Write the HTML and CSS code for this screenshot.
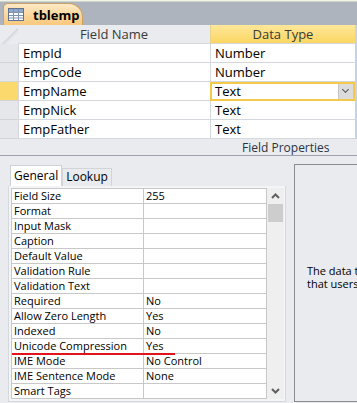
FILE: index.html
```html
<!DOCTYPE html>
<html lang="en">
<head>
    <meta charset="UTF-8">
    <meta name="viewport" content="width=device-width, initial-scale=1.0">
    <title>tblemp</title>
    <link rel="stylesheet" href="styles.css">
</head>
<body>
    <!-- document tab strip -->
    <div class="tabstrip">
        <div class="doc-tab">
            <svg class="tbl-icon" width="16" height="13" viewBox="0 0 16 13">
                <rect x="0.5" y="0.5" width="15" height="12" fill="#fff" stroke="#5f7391"/>
                <rect x="1" y="1" width="14" height="3" fill="#8fa6c7"/>
                <path d="M1 4.5H15M1 7.5H15M1 10H15M5.5 1V12M10.5 1V12" stroke="#7f93b3" stroke-width="1"/>
            </svg>
            <span>tblemp</span>
        </div>
    </div>

    <!-- field grid -->
    <div class="design">
        <div class="sel corner"></div>
        <div class="head">Field Name</div>
        <div class="head active">Data Type</div>

        <div class="sel"></div>
        <div class="cell">EmpId</div>
        <div class="cell">Number</div>

        <div class="sel"></div>
        <div class="cell">EmpCode</div>
        <div class="cell">Number</div>

        <div class="sel current"></div>
        <div class="cell">EmpName</div>
        <div class="cell focus">Text<span class="drop"></span></div>

        <div class="sel"></div>
        <div class="cell">EmpNick</div>
        <div class="cell">Text</div>

        <div class="sel"></div>
        <div class="cell">EmpFather</div>
        <div class="cell">Text</div>
    </div>

    <div class="fp-bar"><span>Field Properties</span></div>

    <!-- field properties -->
    <div class="props">
        <div class="props-left">
            <div class="ptabs">
                <div class="ptab on">General</div>
                <div class="ptab">Lookup</div>
            </div>
            <div class="pbox">
                <div class="pgrid">
                    <div class="pl">Field Size</div><div class="pv">255</div>
                    <div class="pl">Format</div><div class="pv"></div>
                    <div class="pl">Input Mask</div><div class="pv"></div>
                    <div class="pl">Caption</div><div class="pv"></div>
                    <div class="pl">Default Value</div><div class="pv"></div>
                    <div class="pl">Validation Rule</div><div class="pv"></div>
                    <div class="pl">Validation Text</div><div class="pv"></div>
                    <div class="pl">Required</div><div class="pv">No</div>
                    <div class="pl">Allow Zero Length</div><div class="pv">Yes</div>
                    <div class="pl">Indexed</div><div class="pv">No</div>
                    <div class="pl mark">Unicode Compression</div><div class="pv">Yes</div>
                    <div class="pl">IME Mode</div><div class="pv">No Control</div>
                    <div class="pl">IME Sentence Mode</div><div class="pv">None</div>
                    <div class="pl">Smart Tags</div><div class="pv"></div>
                </div>
                <div class="vscroll">
                    <svg class="arr" width="9" height="6" viewBox="0 0 9 6"><path d="M1 5L4.5 1.5L8 5" fill="none" stroke="#606060" stroke-width="2"/></svg>
                    <div class="thumb"></div>
                    <div class="track"></div>
                    <svg class="arr" width="9" height="6" viewBox="0 0 9 6"><path d="M1 1L4.5 4.5L8 1" fill="none" stroke="#606060" stroke-width="2"/></svg>
                </div>
            </div>
        </div>
        <div class="desc">
            <p>The data type determines the kind of values<br>that users can store in the field.</p>
        </div>
    </div>
</body>
</html>
```

FILE: styles.css
```css
body {
    margin: 0;
    width: 357px;
    height: 403px;
    overflow: hidden;
    background-color: #e9ebef;
    font-family: "Open Sans", "Noto Sans", sans-serif;
    color: #000;
}

/* tab strip */
.tabstrip {
    height: 25px;
    background: linear-gradient(#f2f4e4 0, #f2f4e4 1px, #aeb4be 2px, #aeb4be 100%);
    display: flex;
    align-items: flex-end;
    padding-left: 3px;
    box-sizing: border-box;
}
.doc-tab {
    width: 80px;
    height: 22px;
    box-sizing: border-box;
    display: flex;
    align-items: center;
    gap: 9px;
    padding-left: 4px;
    background: linear-gradient(#fde9c4, #f9c77c);
    border: 1px solid #c9a26a;
    border-bottom: none;
    border-radius: 5px 14px 0 0;
    font-size: 13px;
    font-weight: bold;
}
.tbl-icon {
    display: block;
}

/* field grid */
.design {
    display: grid;
    grid-template-columns: 18px 192px 145px;
    grid-auto-rows: 19px;
    width: 357px;
    border-right: 2px solid #c6d3e6;
    box-sizing: border-box;
}
.sel {
    background-color: #e6e7ea;
    border-bottom: 1px solid #d2d4d8;
    box-sizing: border-box;
}
.sel.corner {
    background: linear-gradient(135deg, #e9ebef 55%, #d3d6dc 56%, #e9ebef 70%);
    border-bottom: none;
}
.sel.current {
    background-color: #fcd96c;
}
.head {
    background-color: #e9ebef;
    text-align: center;
    font-size: 13px;
    line-height: 19px;
    color: #3a3a3a;
    border-bottom: 1px solid #d6d8dc;
    box-sizing: border-box;
}
.head.active {
    background: linear-gradient(#fde79a, #fbd662);
    border-left: 1px solid #e9d38a;
}
.cell {
    background-color: #fff;
    font-size: 13px;
    line-height: 18px;
    padding-left: 4px;
    border-left: 1px solid #d4d7dc;
    border-bottom: 1px solid #d4d7dc;
    box-sizing: border-box;
    position: relative;
}
.cell.focus {
    border: 2px solid #f5c94a;
    line-height: 15px;
    padding-left: 3px;
}
.drop {
    position: absolute;
    right: 0;
    top: 0;
    width: 15px;
    height: 15px;
    background-color: #dcdcdc;
    border-left: 1px solid #c6c6c6;
    box-sizing: border-box;
}
.drop::after {
    content: "";
    position: absolute;
    left: 4px;
    top: 3px;
    width: 4px;
    height: 4px;
    border-right: 1px solid #555;
    border-bottom: 1px solid #555;
    transform: rotate(45deg);
}

/* field properties header */
.fp-bar {
    height: 16px;
    border-bottom: 1px solid #9da3ad;
    padding-left: 242px;
    font-size: 12px;
    line-height: 17px;
    color: #2c3440;
}

/* field properties */
.props {
    display: flex;
    gap: 8px;
    padding-top: 8px;
}
.props-left {
    padding-left: 8px;
}
.ptabs {
    display: flex;
    align-items: flex-end;
    height: 22px;
    margin-left: 2px;
}
.ptab {
    font-size: 12px;
    line-height: 16px;
    padding: 0 3px;
    height: 17px;
    background-color: #e9ebef;
    border: 1px solid #d2d4d8;
    border-bottom: none;
}
.ptab.on {
    background-color: #fff;
    height: 20px;
    line-height: 19px;
    border-color: #cfd2d6;
}
.pbox {
    display: flex;
    width: 278px;
    border: 1px solid #d5d8dc;
    border-top: none;
    padding: 2px 1px 2px 2px;
    box-sizing: border-box;
    background-color: #f4f5f7;
}
.pgrid {
    display: grid;
    grid-template-columns: 132px 123px;
    grid-auto-rows: 15px;
    background-color: #fff;
    border-top: 1px solid #c8c8c8;
    border-left: 1px solid #c8c8c8;
}
.pl, .pv {
    font-size: 11px;
    line-height: 14px;
    padding-left: 2px;
    border-right: 1px solid #c8c8c8;
    border-bottom: 1px solid #c8c8c8;
    white-space: nowrap;
    overflow: hidden;
    position: relative;
}
.pl.mark {
    overflow: visible;
}
.pl.mark::after {
    content: "";
    position: absolute;
    left: 0;
    top: 14px;
    width: 163px;
    height: 2px;
    background-color: #e2141b;
    z-index: 1;
}
.vscroll {
    width: 17px;
    display: flex;
    flex-direction: column;
    align-items: center;
    background-color: #efefef;
}
.arr {
    display: block;
    margin: 5px 0;
}
.thumb {
    width: 15px;
    height: 18px;
    background-color: #cdcdcd;
}
.track {
    flex: 1;
}
.desc {
    flex: 1;
    height: 238px;
    border: 1px solid #8a8c90;
    border-right: none;
    background-color: #e9ebef;
    padding: 99px 0 0 12px;
    box-sizing: border-box;
    overflow: hidden;
}
.desc p {
    margin: 0;
    white-space: nowrap;
    font-size: 11px;
    line-height: 13px;
}
```
